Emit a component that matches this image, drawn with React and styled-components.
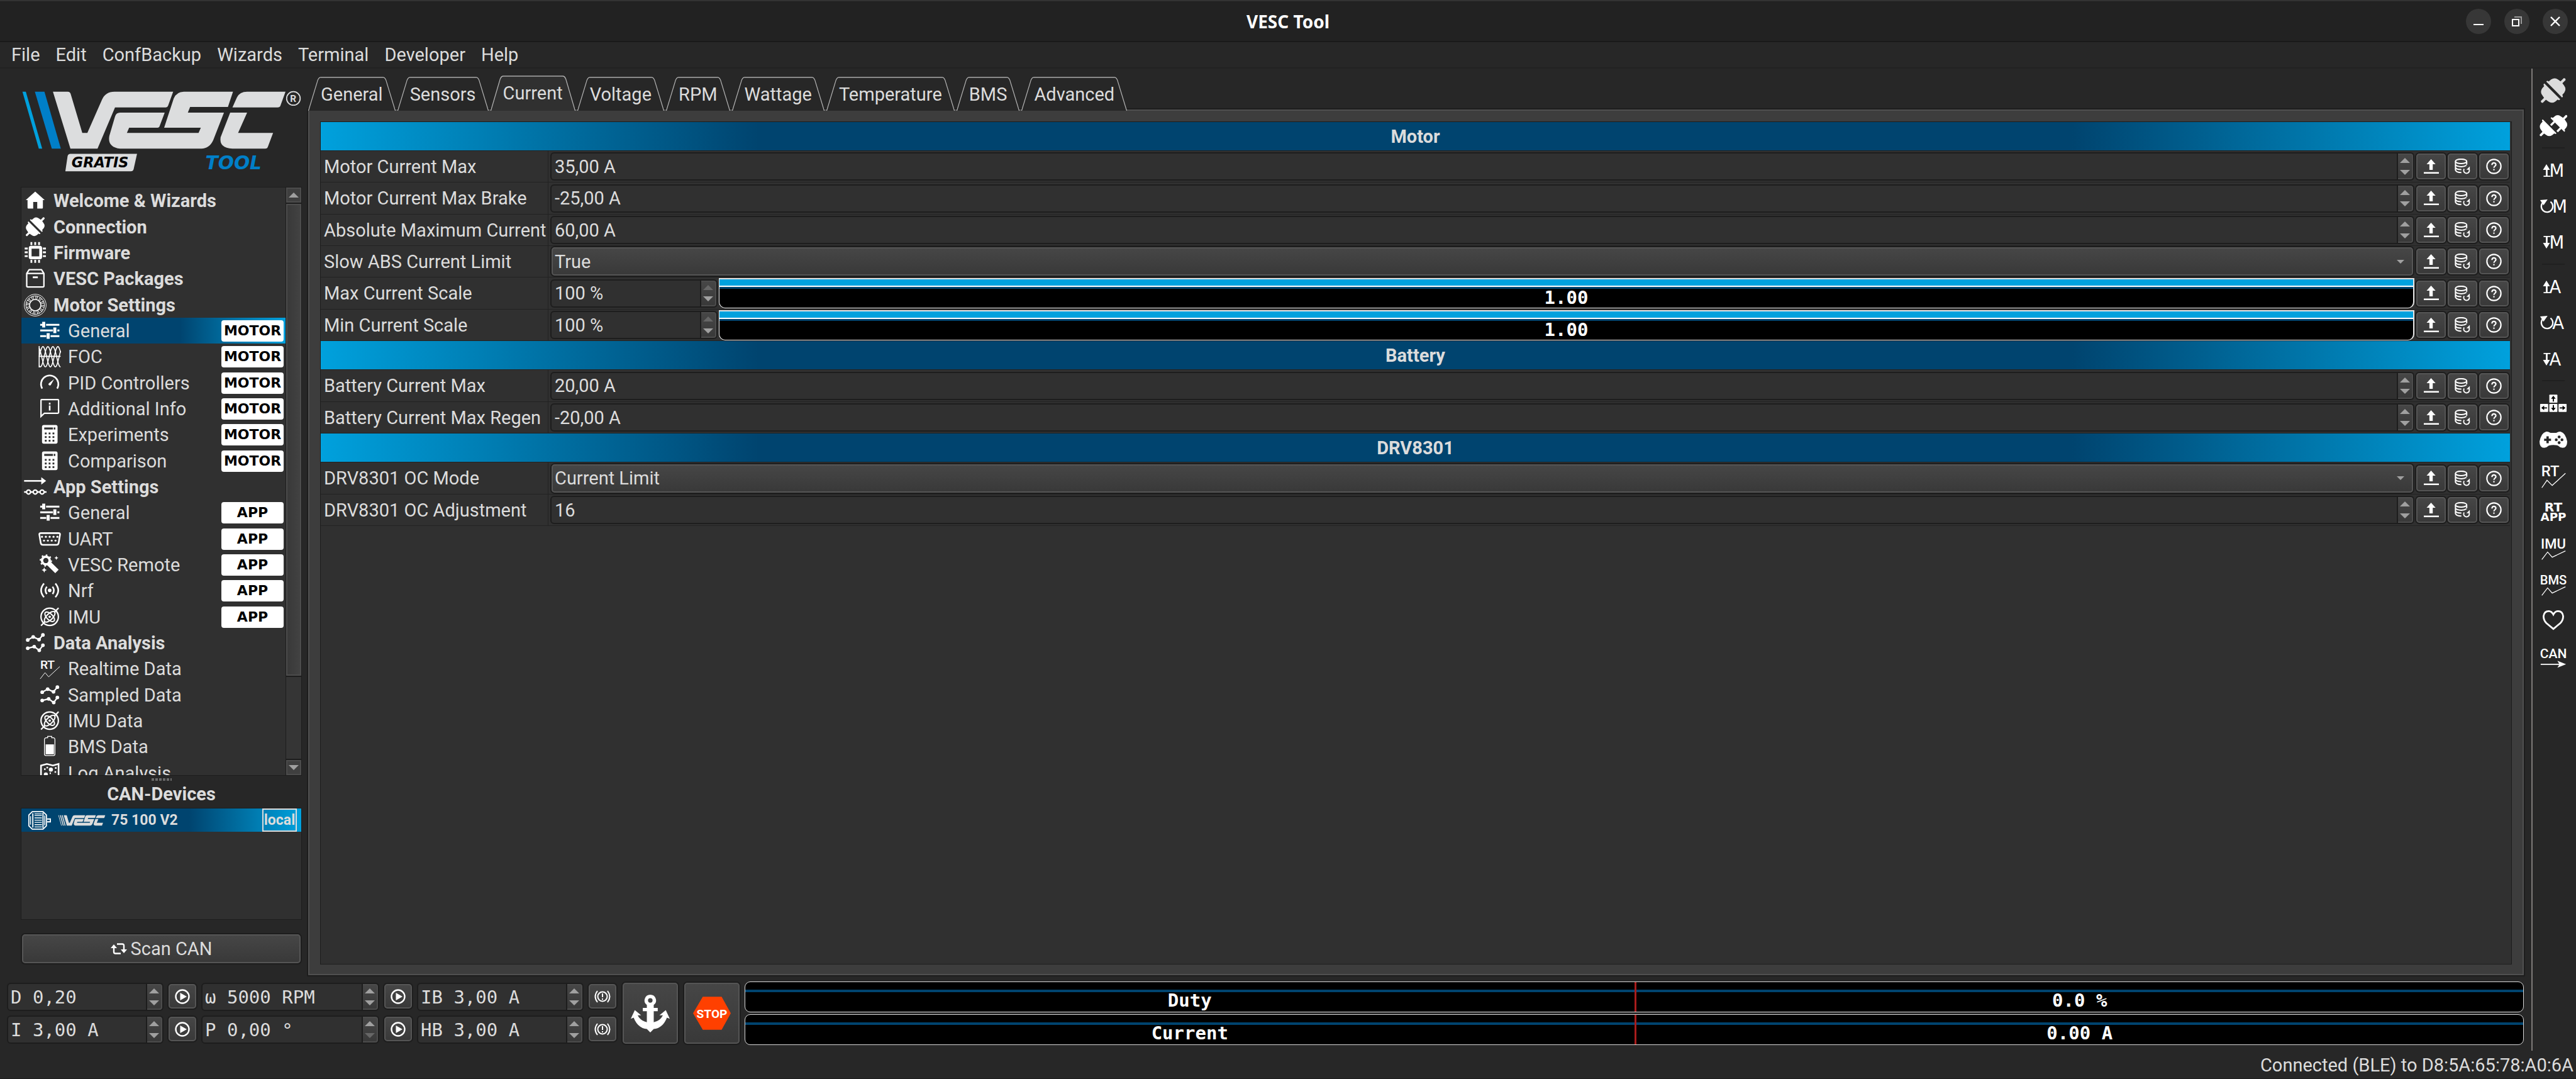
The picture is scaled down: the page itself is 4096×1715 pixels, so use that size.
import React from "react";
import styled, { createGlobalStyle, css } from "styled-components";

const c = {
  bg: "#272727",
  title: "#222222",
  base: "#303030",
  panel: "#3d3d3d",
  edge: "#555555",
  dark: "#1d1d1d",
  line: "#222222",
  text: "#dcdcdc",
  accent: "#00a1dd",
  deep: "#00446f",
};

const Global = createGlobalStyle`
  * { box-sizing: border-box; }
  body { margin: 0; background: ${c.bg}; }
  body, button, input, select {
    font-family: Roboto, "Open Sans", sans-serif;
    font-size: 29px;
    color: ${c.text};
  }
  button { cursor: pointer; }
`;

const mono = css`
  font-family: "DejaVu Sans Mono", "Liberation Mono", monospace;
`;

const raised = css`
  border: 2px solid ${c.edge};
  border-radius: 5px;
  background: linear-gradient(#464646, #393939);
  box-shadow: 0 0 0 2px ${c.dark};
`;

/* ---------- window ---------- */

const Window = styled.div`
  min-height: 100vh;
  display: flex;
  flex-direction: column;
  background: ${c.bg};
`;

const TitleBar = styled.header`
  height: 67px;
  display: grid;
  grid-template-columns: 1fr auto 1fr;
  align-items: center;
  padding: 0 13px;
  background: ${c.title};
  border-top: 2px solid #333333;
  border-bottom: 2px solid #191919;
`;

const Title = styled.h1`
  grid-column: 2;
  margin: 0;
  font-family: "Noto Sans", sans-serif;
  font-size: 28px;
  line-height: 36px;
  font-weight: 700;
  color: #ffffff;
`;

const WindowButtons = styled.div`
  justify-self: end;
  display: flex;
  gap: 21px;
`;

const RoundButton = styled.button`
  width: 40px;
  height: 40px;
  padding: 0;
  border: 0;
  border-radius: 50%;
  background: #373737;
  display: grid;
  place-items: center;
`;

const MenuBar = styled.nav`
  height: 42px;
  display: flex;
  align-items: center;
  gap: 25px;
  padding: 0 18px;
  border-bottom: 2px solid ${c.line};
`;

const MenuItem = styled.button`
  padding: 0;
  border: 0;
  background: none;
  line-height: 36px;
`;

const Body = styled.div`
  flex: 1;
  display: flex;
`;

const Workspace = styled.main`
  flex: 1;
  min-width: 0;
  display: flex;
  flex-direction: column;
  padding: 0 12px 9px 0;
`;

const Upper = styled.div`
  flex: 1;
  display: flex;
  gap: 10px;
`;

const StatusBar = styled.footer`
  height: 45px;
  display: flex;
  justify-content: flex-end;
  align-items: center;
  padding: 1px 4px 0;
  border-bottom: 1px solid ${c.dark};
`;

/* ---------- sidebar ---------- */

const Sidebar = styled.aside`
  width: 480px;
  padding: 33px 0 19px 33px;
  display: flex;
  flex-direction: column;
`;

const TreeBox = styled.div`
  flex: 1 0 0;
  min-height: 0;
  margin-top: 22px;
  display: flex;
  border: 1px solid ${c.dark};
  background: ${c.base};
  overflow: hidden;
`;

const Tree = styled.ul`
  flex: 1;
  height: 0;
  margin: 0;
  padding: 0;
  list-style: none;
`;

const TreeItem = styled.li`
  height: 41px;
  &:nth-child(3n + 1) {
    height: 42px;
  }
`;

const TreeLink = styled.a`
  height: 100%;
  display: flex;
  align-items: center;
  gap: 11px;
  padding: 0 3px 0 ${(p) => (p.$child ? 27 : 4)}px;
  font-weight: ${(p) => (p.$child ? 400 : 700)};
  color: ${c.text};
  text-decoration: none;
  white-space: nowrap;
  background: ${(p) =>
    p.$active ? `linear-gradient(90deg, ${c.deep} 60%, ${c.accent})` : "none"};
`;

const Badge = styled.span`
  width: 99px;
  height: 34px;
  margin-left: auto;
  border-radius: 4px;
  background: #ffffff;
  color: #000000;
  font: 700 22px/34px "DejaVu Sans", sans-serif;
  text-align: center;
`;

const ScrollBar = styled.div`
  width: 25px;
  display: flex;
  flex-direction: column;
  border-left: 1px solid ${c.dark};
  background: #353535;
`;

const ScrollButton = styled.button`
  height: 24px;
  padding: 0;
  border: 2px solid #4c4c4c;
  background: #3f3f3f;
  display: grid;
  place-items: center;
`;

const ScrollTrack = styled.div`
  flex: 1;
  display: flex;
  border: solid ${c.dark};
  border-width: 2px 0;
`;

const ScrollThumb = styled.div`
  width: 100%;
  height: 85%;
  border: 2px solid #4c4c4c;
  background: linear-gradient(90deg, #393939, #424242);
  box-shadow: 0 2px 0 ${c.dark};
`;

const Grip = styled.div`
  height: 4px;
  width: 32px;
  margin: 4px auto 0;
  background: repeating-linear-gradient(90deg, #6a6a6a 0 4px, transparent 4px 6px);
`;

const SideTitle = styled.h2`
  margin: 2px 0 3px;
  font-size: 29px;
  line-height: 38px;
  font-weight: 700;
  text-align: center;
`;

const DeviceBox = styled.div`
  height: 178px;
  border: 1px solid ${c.dark};
  background: ${c.base};
`;

const Device = styled.button`
  width: 100%;
  height: 37px;
  display: flex;
  align-items: center;
  padding: 0 7px 0 11px;
  border: 0;
  background: linear-gradient(90deg, ${c.deep} 60%, ${c.accent});
  font-size: 23px;
  font-weight: 700;
`;

const DeviceLogo = styled.span`
  display: flex;
  margin-left: 11px;
`;

const DeviceName = styled.span`
  flex: 1;
  margin-left: 9px;
  text-align: left;
`;

const LocalTag = styled.span`
  width: 55px;
  border: 2px solid ${c.text};
  line-height: 33px;
  text-align: center;
`;

const ScanButton = styled.button`
  ${raised}
  height: 46px;
  margin: 23px 2px 0 2px;
  padding: 0;
  display: flex;
  align-items: center;
  justify-content: center;
  gap: 6px;
`;

/* ---------- tabs and parameter panel ---------- */

const Content = styled.section`
  flex: 1;
  min-width: 0;
  display: flex;
  flex-direction: column;
  padding-top: 11px;
`;

const Tabs = styled.div`
  display: flex;
  align-items: flex-end;
  gap: 3px;
  height: 56px;
  margin-bottom: -2px;
  position: relative;
`;

const Tab = styled.button`
  display: flex;
  height: ${(p) => (p.$active ? 56 : 54)}px;
  padding: 0;
  border: 0;
  background: none;
`;

const TabLabel = styled.span`
  height: 100%;
  padding-top: 8px;
  border-top: 2px solid #8a8a8a;
  background: ${(p) => (p.$active ? c.base : c.bg)};
  line-height: 36px;
`;

const TabSide = styled.svg`
  width: 20px;
  height: 100%;
  display: block;
`;

const Panel = styled.div`
  flex: 1;
  display: flex;
  padding: 17px 17px 15px;
  border: 2px solid #505050;
  background: ${c.panel};
  box-shadow: 0 0 0 2px ${c.dark};
`;

const Frame = styled.form`
  flex: 1;
  padding-right: 2px;
  border: 1px solid ${c.dark};
  background: ${c.base};
`;

const GroupHeader = styled.h2`
  height: 46px;
  margin: 0;
  border-bottom: 1px solid ${c.line};
  background: linear-gradient(
    90deg,
    ${c.accent},
    ${c.deep} 20%,
    ${c.deep} 80%,
    ${c.accent}
  );
  font-size: 29px;
  line-height: 46px;
  font-weight: 700;
  text-align: center;
`;

const ParamRow = styled.div`
  height: 50px;
  display: grid;
  grid-template-columns: 362px 1fr auto;
  align-items: center;
  padding-right: 2px;
  border-bottom: 1px solid ${c.line};
  &:nth-child(3n) {
    height: 51px;
  }
`;

const ParamLabel = styled.label`
  height: 100%;
  display: flex;
  align-items: center;
  padding-left: 5px;
  border-right: 1px solid ${c.line};
  white-space: nowrap;
`;

const Editor = styled.div`
  min-width: 0;
  display: flex;
  align-items: center;
  gap: 2px;
  padding: 0 3px;
`;

const SpinBox = styled.div`
  flex: ${(p) => (p.$fixed ? "none" : "1")};
  width: ${(p) => (p.$fixed ? "266px" : "auto")};
  min-width: 0;
  height: 45px;
  display: flex;
  border: 2px solid ${c.dark};
  border-radius: 6px;
  background: ${c.base};
  overflow: hidden;
`;

const SpinInput = styled.input`
  flex: 1;
  min-width: 0;
  padding: 0 0 0 ${(p) => (p.$mono ? 4 : 5)}px;
  border: 0;
  background: none;
  outline: none;
  ${(p) => p.$mono && mono}
`;

const Steps = styled.div`
  width: 24px;
  display: grid;
  grid-template-rows: 1fr 1fr;
  border: solid #4c4c4c;
  border-width: 2px 2px 2px 0;
  border-radius: 0 4px 4px 0;
  background: linear-gradient(#464646, #393939);
  box-shadow: -2px 0 0 ${c.dark};
`;

const Step = styled.button`
  padding: 0;
  border: 0;
  background: none;
  display: grid;
  place-items: center;
  color: ${(p) => (p.$off ? "#666666" : "#a0a0a0")};
`;

const Combo = styled.span`
  ${raised}
  flex: 1;
  height: 45px;
  margin: 0 2px;
  display: flex;
  align-items: center;
  padding-right: 11px;
`;

const Select = styled.select`
  flex: 1;
  height: 100%;
  padding: 0 0 0 3px;
  border: 0;
  outline: none;
  appearance: none;
  background: none;
`;

const RowButtons = styled.div`
  display: flex;
  gap: 3px;
`;

const ToolButton = styled.button`
  ${raised}
  width: 47px;
  height: 41px;
  padding: 0;
  display: grid;
  place-items: center;
`;

const ScaleBar = styled.output`
  flex: 1;
  height: 48px;
  display: flex;
  flex-direction: column;
  border: 2px solid #e6e6e6;
  border-width: 2px 2px 1px 1px;
  border-radius: 0 0 10px 10px;
  background: #000000;
`;

const ScaleFill = styled.span`
  height: 12px;
  flex: none;
  background: ${c.accent};
  border-bottom: 2px solid #ffffff;
  box-shadow: 0 3px 0 ${c.deep};
`;

const ScaleText = styled.span`
  ${mono}
  flex: 1;
  font-weight: 700;
  line-height: 34px;
  text-align: center;
  color: #ffffff;
`;

/* ---------- bottom controls ---------- */

const Controls = styled.div`
  display: flex;
  gap: 6px;
  padding: 10px 0 0 11px;
`;

const ControlColumn = styled.div`
  display: grid;
  grid-template-columns: ${(p) => p.$width}px 48px;
  gap: 7px 6px;
  padding: 2px 0;
`;

const SmallButton = styled.button`
  ${raised}
  height: 39px;
  width: 44px;
  margin: 2px;
  padding: 0;
  display: grid;
  place-items: center;
`;

const BigButton = styled.button`
  ${raised}
  width: 88px;
  height: 97px;
  margin: 2px;
  padding: 0;
  display: grid;
  place-items: center;
`;

const Gauges = styled.div`
  flex: 1;
  display: grid;
  grid-template-rows: 1fr 1fr;
  gap: 3px;
`;

const Gauge = styled.div`
  display: grid;
  grid-template-columns: 1fr 1fr;
  border: 1px solid #d8d8d8;
  border-radius: 9px;
  background: linear-gradient(
    #000000 12px,
    ${c.deep} 12px,
    ${c.deep} 16px,
    #000000 16px
  );
  ${mono}
  font-weight: 700;
  line-height: 36px;
  color: #ffffff;
  text-align: center;
`;

const GaugeCell = styled.span`
  padding-top: 11px;
  & + & {
    border-left: 3px solid #a81c1c;
  }
`;

/* ---------- right toolbar ---------- */

const ToolBar = styled.aside`
  width: 71px;
  display: flex;
  flex-direction: column;
  align-items: center;
  padding: 6px 3px 0 0;
  border-left: 2px solid #7d7a78;
`;

const BarButton = styled.button`
  width: 60px;
  height: 57px;
  padding: 0;
  border: 0;
  background: none;
  display: grid;
  place-items: center;
  &:nth-child(3n) {
    height: 58px;
  }
`;

const BarLine = styled.hr`
  width: 36px;
  height: 2px;
  margin: 5px 0 6px;
  border: 0;
  background: #202020;
`;

/* ---------- drawings ---------- */

const TreeSvg = ({ children }) => (
  <svg width="36" height="36" viewBox="0 0 112 112" fill="none" stroke="#fff" aria-hidden="true">
    {children}
  </svg>
);

const wave = (phase) => {
  const pts = [];
  for (let x = 4; x <= 110; x += 2) {
    pts.push(`${x} ${(56 - 50 * Math.sin(((x - 4) / 74) * 2 * Math.PI + phase)).toFixed(1)}`);
  }
  return "M" + pts.join("L");
};

const PlugHalf = ({ flip, prongs }) => (
  <g transform={flip ? "scale(-1 1)" : undefined} stroke="none">
    <path d="M-5 -42Q-12 -44 -12 -36L-24 -35Q-40 -32 -42 -16L-44 -5H-61Q-67 0 -61 5H-44L-42 16Q-40 32 -24 35L-12 36Q-12 44 -5 42Z" />
    {prongs && <path d="M-6 -24H16V-15H-6ZM-6 15H16V24H-6Z" />}
  </g>
);

const Plug = ({ color = "#fff" }) => (
  <g transform="translate(56 54) rotate(-45)" fill={color}>
    <PlugHalf />
    <PlugHalf flip />
  </g>
);

const Calculator = () => (
  <>
    <rect x="18" y="8" width="77" height="92" rx="9" fill="#fff" stroke="none" />
    <path d="M29 20H72V30H29Z" fill={c.base} stroke="none" />
    <path d="M76 20H84V30H76Z" fill={c.base} stroke="none" />
    {[50, 68, 86].map((y) =>
      [37, 56, 75].map((x) => (
        <rect key={x + "-" + y} x={x - 5} y={y - 5} width="9" height="9" fill={c.base} stroke="none" />
      ))
    )}
  </>
);

const Nodes = () => (
  <g strokeWidth="7" fill="#fff">
    <path d="M19 41L46 26L75 39L94 16M19 82L51 74L76 92L94 67" fill="none" />
    {[[19, 41], [46, 26], [75, 39], [94, 16], [19, 82], [51, 74], [76, 92], [94, 67]].map(([x, y]) => (
      <circle key={x + "-" + y} cx={x} cy={y} r="9" stroke="none" />
    ))}
  </g>
);

const Imu = () => (
  <g strokeWidth="7">
    <circle cx="56" cy="54" r="43" />
    <path d="M13 98L33 78M79 32L100 10" />
    <ellipse cx="56" cy="54" rx="34" ry="15" transform="rotate(-45 56 54)" strokeWidth="6" />
    <ellipse cx="56" cy="54" rx="30" ry="15" transform="rotate(45 56 54)" strokeWidth="6" />
    <circle cx="56" cy="54" r="6" fill="#fff" stroke="none" />
  </g>
);

const Tune = () => (
  <g fill="#fff" stroke="none">
    <path d="M9 21H19V11H34V39H19V30H9ZM38 21H104V30H38Z" />
    <path d="M9 49H72V58H9ZM74 39H89V67H74ZM94 49H104V58H94Z" />
    <path d="M9 77H39V86H9ZM41 67H56V95H41ZM60 77H104V86H60Z" />
  </g>
);

const treeIcons = {
  home: <path d="M56 11L103 53H94V91Q94 95 90 95H66V62H46V95H22Q18 95 18 91V53H9Z" fill="#fff" stroke="none" />,
  plug: <Plug />,
  chip: (
    <>
      <rect x="31" y="28" width="52" height="52" rx="4" strokeWidth="14" />
      <path d="M37 2V17M56 2V17M75 2V17M37 90V105M56 90V105M75 90V105M4 34H19M4 53H19M4 72H19M94 34H109M94 53H109M94 72H109" strokeWidth="9" />
    </>
  ),
  box: (
    <>
      <path d="M14 30L26 11H87L99 30V92Q99 97 94 97H19Q14 97 14 92ZM14 30H99" strokeWidth="7" strokeLinejoin="round" />
      <path d="M44 49H69" strokeWidth="9" />
    </>
  ),
  stator: (
    <>
      <circle cx="56" cy="56" r="54" strokeWidth="3" />
      <circle cx="56" cy="56" r="46" strokeWidth="3" />
      <circle cx="56" cy="56" r="28" strokeWidth="5" />
      <circle cx="56" cy="56" r="37" strokeWidth="16" strokeDasharray="3 4 3 9.4" />
    </>
  ),
  tune: <Tune />,
  waves: (
    <>
      <path d="M4 3V109M4 54H110" strokeWidth="5" />
      <path d={wave(0)} strokeWidth="5" />
      <path d={wave(2.09)} strokeWidth="5" />
      <path d={wave(4.19)} strokeWidth="5" />
    </>
  ),
  speed: (
    <>
      <path d="M19 83A43 43 0 1 1 93 83" strokeWidth="8" />
      <path d="M78 36L61 66Q54 70 50 63Q49 58 53 56Z" fill="#fff" stroke="none" />
    </>
  ),
  info: (
    <>
      <path d="M13 93V14Q13 10 17 10H96Q100 10 100 14V73Q100 77 96 77H30Z" strokeWidth="7" />
      <path d="M56 25V34M56 39V64" strokeWidth="8" />
    </>
  ),
  calculator: <Calculator />,
  app: (
    <>
      <path d="M1 26H90" strokeWidth="8" />
      <path d="M86 8L110 26L86 44Z" fill="#fff" stroke="none" />
      <path d="M1 81H13M33 81H46M66 81H80M100 81H112" strokeWidth="8" />
      <circle cx="23" cy="81" r="10" strokeWidth="7" />
      <circle cx="56" cy="81" r="10" strokeWidth="7" />
      <circle cx="90" cy="81" r="10" strokeWidth="7" />
    </>
  ),
  uart: (
    <>
      <path d="M13 26H99Q109 26 107 34L100 76Q98 84 90 84H22Q14 84 12 76L5 34Q3 26 13 26Z" strokeWidth="8" />
      {[18, 37, 56, 75, 94].map((x) => <circle key={x} cx={x} cy="44" r="5" fill="#fff" stroke="none" />)}
      {[28, 47, 66, 85].map((x) => <circle key={x} cx={x} cy="63" r="5" fill="#fff" stroke="none" />)}
    </>
  ),
  wand: (
    <>
      <circle cx="37" cy="34" r="19" strokeWidth="12" />
      <circle cx="37" cy="34" r="27" strokeWidth="7" strokeDasharray="8 13" />
      <path d="M50 47L92 88" strokeWidth="24" strokeLinejoin="round" />
      <path d="M89 11L92 18L99 21L92 24L89 31L86 24L79 21L86 18ZM29 68L33 77L42 81L33 85L29 94L25 85L16 81L25 77Z" fill="#fff" stroke="none" />
    </>
  ),
  radio: (
    <>
      <circle cx="56" cy="54" r="9" fill="#fff" stroke="none" />
      <path d="M42 36Q28 54 42 72M70 36Q84 54 70 72" strokeWidth="8" />
      <path d="M28 20Q-1 54 28 88M84 20Q113 54 84 88" strokeWidth="8" />
    </>
  ),
  imu: <Imu />,
  nodes: <Nodes />,
  rt: (
    <>
      <text x="9" y="56" fontFamily="Roboto, sans-serif" fontSize="60" fontWeight="500" fill="#fff" stroke="none">RT</text>
      <path d="M9 106L33 75L51 96L106 45" strokeWidth="3" />
    </>
  ),
  battery: (
    <>
      <path d="M46 4H66V11H76Q82 13 82 20V92Q82 99 75 99H37Q30 99 30 92V20Q30 13 37 11H46Z" strokeWidth="4" />
      <rect x="36" y="44" width="41" height="49" fill="#fff" stroke="none" />
    </>
  ),
  map: (
    <>
      <path d="M13 100V18L42 10L72 18L100 10V100" strokeWidth="8" />
      <circle cx="62" cy="38" r="10" fill="#fff" stroke="none" />
      <circle cx="37" cy="62" r="10" fill="#fff" stroke="none" />
      <path d="M28 36H36M40 28H48M82 30H90M80 50H88M56 56H62" strokeWidth="8" />
    </>
  ),
};

const vescPaths = [
  "M94 162H120Q125 162 126 168L146 235H155L181 176Q187 162 203 162H307L298 187Q297 190 294 190H204L173 263H125Z",
  "M213 199H292L283 223Q282 226 278 226H229L225 235H352L356 226H291L308 174Q313 162 326 162H413L404 189H337L333 199H397L378 248Q371 263 357 263H213Q190 260 194 240L204 206Q206 199 213 199Z",
  "M412 190L420 172Q425 162 438 162H506L497 187Q496 190 492 190Z",
  "M408 199H438L422 235H484L475 259Q474 263 470 263H412Q388 262 391 243Z",
];

const Logo = () => (
  <svg width="447" height="133" viewBox="37 158 498 148" role="img" aria-label="VESC Tool Gratis">
    <path d="M40 162H46L75 263H69Z" fill="#00a1dd" />
    <path d="M62 162H79L108 263H92Z" fill="#007fc8" />
    {vescPaths.map((d) => <path key={d} d={d} fill="#dcddde" />)}
    <circle cx="520" cy="174" r="12" fill="none" stroke="#dcddde" strokeWidth="2" />
    <text x="514" y="180" fontFamily="Roboto, sans-serif" fontSize="17" fontWeight="700" fill="#dcddde">R</text>
    <path d="M125 272H243L237 299Q236 303 232 303H116L120 276Q121 272 125 272Z" fill="#dcddde" />
    <text x="127" y="296" fontFamily="DejaVu Sans, sans-serif" fontSize="25" fontWeight="700" fontStyle="italic" fill="#000">GRATIS</text>
    <text x="364" y="299" fontFamily="DejaVu Sans, sans-serif" fontSize="33" fontWeight="700" fontStyle="italic" fill="#007fc8">TOOL</text>
  </svg>
);

const MiniLogo = () => (
  <svg width="76" height="18" viewBox="36 158 474 109" preserveAspectRatio="none" aria-hidden="true">
    <path d="M40 162H46L75 263H69ZM56 162H66L95 263H85ZM74 162H84L113 263H103Z" fill={c.text} />
    {vescPaths.map((d) => <path key={d} d={d} fill={c.text} />)}
  </svg>
);

const MotorIcon = () => (
  <svg width="36" height="30" viewBox="0 0 40 33" fill="none" stroke="#fff" strokeWidth="2" aria-hidden="true">
    <path d="M7 1H26L32 7V26L26 32H7L1 26V7Z" />
    <path d="M33 14H39V19H33M8 4V29M26 3V30" />
    <path d="M11 5H24M11 8H24M11 12H24M11 16H24M11 20H24M11 24H24M11 28H24" strokeWidth="1.5" />
    <path d="M4 9V24M29 8V25" strokeWidth="1.5" />
  </svg>
);

const Triangle = ({ down, w = 16, h = 8 }) => (
  <svg width={w} height={h} viewBox="0 0 16 8" fill="currentColor" aria-hidden="true">
    <path d={down ? "M0 0H16L8 8Z" : "M0 8H16L8 0Z"} />
  </svg>
);

const UploadIcon = () => (
  <svg width="24" height="24" viewBox="0 0 27 27" fill="#fff" aria-hidden="true">
    <path d="M13 0L21 9H16V19H10V9H5ZM0 23H27V26H0Z" />
  </svg>
);

const DefaultsIcon = () => (
  <svg width="25" height="25" viewBox="0 0 28 28" fill="none" stroke="#fff" strokeWidth="2.2" aria-hidden="true">
    <ellipse cx="11.5" cy="5" rx="10" ry="4" />
    <path d="M1.5 5V20C1.5 23 6 25 12 25M21.5 5V11M1.5 10C1.5 13 7 14.5 12 14.5C16 14.5 19 13.5 21 12M1.5 15C1.5 18 6 19.5 12 19.5" />
    <path d="M24.5 17.5A5 5 0 1 1 17 18.5" />
    <path d="M27 14V20H21Z" fill="#fff" stroke="none" />
  </svg>
);

const HelpIcon = () => (
  <svg width="25" height="25" viewBox="0 0 28 28" fill="none" stroke="#fff" strokeWidth="2.4" aria-hidden="true">
    <circle cx="14" cy="14" r="12.5" />
    <path d="M10.5 11.5C10.5 6.5 17.5 6.5 17.5 11C17.5 13.5 14 13.5 14 16.5M14 18.5V21" />
  </svg>
);

const PlayIcon = () => (
  <svg width="24" height="24" viewBox="0 0 24 24" aria-hidden="true">
    <circle cx="12" cy="12" r="10.5" fill="none" stroke="#fff" strokeWidth="2.4" />
    <path d="M8.5 6L19 12L8.5 18Z" fill="#fff" />
  </svg>
);

const BrakeIcon = () => (
  <svg width="26" height="20" viewBox="0 0 26 20" fill="none" stroke="#fff" strokeWidth="2" aria-hidden="true">
    <circle cx="13" cy="10" r="7.5" />
    <path d="M13 5V11M13 13V15M5 1Q-2 10 5 19M21 1Q28 10 21 19" />
  </svg>
);

const ScanIcon = () => (
  <svg width="26" height="18" viewBox="0 0 26 18" fill="none" stroke="#fff" strokeWidth="2.4" aria-hidden="true">
    <path d="M5 6V14Q5 16.5 7.5 16.5H16M21 12V4Q21 1.5 18.5 1.5H10" />
    <path d="M0 8L5 2L10 8ZM16 10H26L21 16Z" fill="#fff" stroke="none" />
  </svg>
);

const AnchorIcon = () => (
  <svg width="62" height="62" viewBox="-34 -34 68 68" fill="#fff" aria-hidden="true">
    <path fillRule="evenodd" d="M0 -33A10 10 0 0 1 6 -15V-10H13V-4H6V15Q17 13 22 3L16 3L27 -6L34 9L29 7Q22 25 6 27L0 33L-6 27Q-22 25 -29 7L-34 9L-27 -6L-16 3L-22 3Q-17 13 -6 15V-4H-13V-10H-6V-15A10 10 0 0 1 0 -33ZM0 -27A4 4 0 1 0 0 -19A4 4 0 1 0 0 -27Z" />
  </svg>
);

const StopIcon = () => (
  <svg width="60" height="53" viewBox="0 0 66 58" role="img" aria-label="Stop">
    <path d="M17 0H50L66 29L50 58H17L0 29Z" fill="#ff4000" />
    <text x="33" y="37" textAnchor="middle" fontFamily="Roboto, sans-serif" fontSize="21" fontWeight="700" fill="#fff">STOP</text>
  </svg>
);

const BarSvg = ({ children }) => (
  <svg width="44" height="44" viewBox="0 0 48 48" fill="#fff" aria-hidden="true">
    {children}
  </svg>
);

const letterIcon = (kind, letter) => (
  <BarSvg>
    {kind === "up" && <path d="M12 13L18 23H14V33H19V35H7V33H11V23H6Z" />}
    {kind === "down" && <path d="M12 35L18 25H14V15H19V13H7V15H11V25H6Z" />}
    {kind === "cycle" && (
      <>
        <path d="M19 16A10 10 0 1 1 6 17" fill="none" stroke="#fff" strokeWidth="2.5" />
        <path d="M1 13L14 12L7 22Z" />
      </>
    )}
    <text x={kind === "cycle" ? 22 : 17} y="35" fontFamily="DejaVu Sans, sans-serif" fontSize="30">{letter}</text>
  </BarSvg>
);

const chartIcon = (label, size) => (
  <BarSvg>
    <text x={label === "RT" ? 3 : 24} y="25" textAnchor={label === "RT" ? "start" : "middle"} fontFamily="Roboto, sans-serif" fontSize={size} fontWeight="500">{label}</text>
    <path d={label === "RT" ? "M4 45L13 32L22 41L45 20" : "M4 44L14 31L22 40L45 29"} fill="none" stroke="#fff" strokeWidth="1.4" />
  </BarSvg>
);

const arrowKey = (x, y, turn) => (
  <g transform={`translate(${x} ${y})`}>
    <rect x="-7" y="-7" width="14" height="14" rx="1" />
    <path d="M0 -5L4 0H1V5H-1V0H-4Z" fill="#000" transform={`rotate(${turn})`} />
  </g>
);

const toolbar = [
  ["Connect", <BarSvg><g transform="translate(-2 -1) scale(0.46)"><Plug color="#dcdcdc" /></g></BarSvg>],
  ["Disconnect", (
    <BarSvg>
      <g transform="translate(24 24) rotate(-45) scale(0.4)">
        <g transform="translate(-6 -12)"><PlugHalf /></g>
        <g transform="translate(12 8)"><PlugHalf flip prongs /></g>
      </g>
    </BarSvg>
  )],
  null,
  ["Read motor configuration", letterIcon("up", "M")],
  ["Read default motor configuration", letterIcon("cycle", "M")],
  ["Write motor configuration", letterIcon("down", "M")],
  null,
  ["Read app configuration", letterIcon("up", "A")],
  ["Read default app configuration", letterIcon("cycle", "A")],
  ["Write app configuration", letterIcon("down", "A")],
  null,
  ["Keyboard control", <BarSvg>{arrowKey(24, 16, 0)}{arrowKey(8, 32, -90)}{arrowKey(24, 32, 180)}{arrowKey(40, 32, 90)}</BarSvg>],
  ["Gamepad control", (
    <BarSvg>
      <path d="M11 10Q14 9 19 12H29Q34 9 37 10Q45 12 48 27Q48 38 40 38Q36 38 32 34Q24 32 16 34Q12 38 8 38Q0 38 0 27Q3 12 11 10Z" />
      <path d="M12 18H16V22H20V26H16V30H12V26H8V22H12Z" fill={c.bg} />
      <g fill={c.bg}>
        <circle cx="34" cy="19" r="2.5" /><circle cx="34" cy="29" r="2.5" />
        <circle cx="29" cy="24" r="2.5" /><circle cx="39" cy="24" r="2.5" />
      </g>
    </BarSvg>
  )],
  ["Stream realtime data", chartIcon("RT", 26)],
  ["Stream realtime app data", (
    <BarSvg>
      <text x="24" y="24" textAnchor="middle" fontFamily="DejaVu Sans, sans-serif" fontSize="22" fontWeight="700">RT</text>
      <text x="24" y="40" textAnchor="middle" fontFamily="DejaVu Sans, sans-serif" fontSize="20" fontWeight="700">APP</text>
    </BarSvg>
  )],
  ["Stream IMU data", chartIcon("IMU", 24)],
  ["Stream BMS data", chartIcon("BMS", 22)],
  ["Send alive packets", <BarSvg><path d="M24 40L12 30Q7 25 7 18Q8 9 16 9Q21 9 24 15Q27 9 32 9Q40 9 41 18Q41 25 36 30Z" fill="none" stroke="#fff" strokeWidth="3" /></BarSvg>],
  ["CAN forward", (
    <BarSvg>
      <text x="24" y="27" textAnchor="middle" fontFamily="Roboto, sans-serif" fontSize="23" fontWeight="500">CAN</text>
      <path d="M2 37H34L31 32L46 38L31 44L34 39H2Z" />
    </BarSvg>
  )],
];

/* ---------- data ---------- */

const tree = [
  ["home", "Welcome & Wizards"],
  ["plug", "Connection"],
  ["chip", "Firmware"],
  ["box", "VESC Packages"],
  ["stator", "Motor Settings"],
  ["tune", "General", "MOTOR"],
  ["waves", "FOC", "MOTOR"],
  ["speed", "PID Controllers", "MOTOR"],
  ["info", "Additional Info", "MOTOR"],
  ["calculator", "Experiments", "MOTOR"],
  ["calculator", "Comparison", "MOTOR"],
  ["app", "App Settings"],
  ["tune", "General", "APP"],
  ["uart", "UART", "APP"],
  ["wand", "VESC Remote", "APP"],
  ["radio", "Nrf", "APP"],
  ["imu", "IMU", "APP"],
  ["nodes", "Data Analysis"],
  ["rt", "Realtime Data", ""],
  ["nodes", "Sampled Data", ""],
  ["imu", "IMU Data", ""],
  ["battery", "BMS Data", ""],
  ["map", "Log Analysis", ""],
];

const groups = [
  ["Motor", [
    ["Motor Current Max", "35,00 A"],
    ["Motor Current Max Brake", "-25,00 A"],
    ["Absolute Maximum Current", "60,00 A"],
    ["Slow ABS Current Limit", "True", "combo"],
    ["Max Current Scale", "100 %", "scale"],
    ["Min Current Scale", "100 %", "scale"],
  ]],
  ["Battery", [
    ["Battery Current Max", "20,00 A"],
    ["Battery Current Max Regen", "-20,00 A"],
  ]],
  ["DRV8301", [
    ["DRV8301 OC Mode", "Current Limit", "combo"],
    ["DRV8301 OC Adjustment", "16"],
  ]],
];

const controls = [
  [249, PlayIcon, [["Duty", "D 0,20"], ["Current", "I 3,00 A"]]],
  [283, PlayIcon, [["Speed", "ω 5000 RPM"], ["Position", "P 0,00 °"]]],
  [265, BrakeIcon, [["Brake current", "IB 3,00 A"], ["Handbrake current", "HB 3,00 A"]]],
];

/* ---------- parts ---------- */

function Spin({ id, label, value, fixed, monospace, upOff, downOff }) {
  return (
    <SpinBox $fixed={fixed}>
      <SpinInput id={id} aria-label={label} defaultValue={value} $mono={monospace} />
      <Steps>
        <Step type="button" aria-label="Increase" $off={upOff}><Triangle /></Step>
        <Step type="button" aria-label="Decrease" $off={downOff}><Triangle down /></Step>
      </Steps>
    </SpinBox>
  );
}

function Param({ name, value, kind }) {
  const id = name.toLowerCase().replace(/ /g, "-");
  return (
    <ParamRow>
      <ParamLabel htmlFor={id}>{name}</ParamLabel>
      <Editor>
        {kind === "combo" ? (
          <Combo>
            <Select id={id} defaultValue={value}><option>{value}</option></Select>
            <Step as="span"><Triangle down w={14} h={6} /></Step>
          </Combo>
        ) : (
          <Spin id={id} value={value} fixed={kind === "scale"} upOff={kind === "scale"} />
        )}
        {kind === "scale" && (
          <ScaleBar>
            <ScaleFill />
            <ScaleText>1.00</ScaleText>
          </ScaleBar>
        )}
      </Editor>
      <RowButtons>
        <ToolButton type="button" aria-label="Read current value"><UploadIcon /></ToolButton>
        <ToolButton type="button" aria-label="Read default value"><DefaultsIcon /></ToolButton>
        <ToolButton type="button" aria-label="Help"><HelpIcon /></ToolButton>
      </RowButtons>
    </ParamRow>
  );
}

function TabButton({ label, active }) {
  const fill = active ? c.base : c.bg;
  return (
    <Tab type="button" role="tab" aria-selected={active} $active={active}>
      <TabSide viewBox="0 0 21 56" preserveAspectRatio="none" aria-hidden="true">
        <path d="M0.5 56L15 9Q17 1 21 1V56Z" fill={fill} />
        <path d="M0.5 56L15 9Q17 1 21 1" fill="none" stroke="#b4b4b4" strokeWidth="1.3" />
      </TabSide>
      <TabLabel $active={active}>{label}</TabLabel>
      <TabSide viewBox="0 0 21 56" preserveAspectRatio="none" aria-hidden="true">
        <path d="M20.5 56L6 9Q4 1 0 1V56Z" fill={fill} />
        <path d="M20.5 56L6 9Q4 1 0 1" fill="none" stroke="#b4b4b4" strokeWidth="1.3" />
      </TabSide>
    </Tab>
  );
}

export default function App() {
  return (
    <Window>
      <Global />
      <TitleBar>
        <Title>VESC Tool</Title>
        <WindowButtons>
          <RoundButton aria-label="Minimize">
            <svg width="16" height="16" viewBox="0 0 16 16"><path d="M0 13H16" stroke="#fff" strokeWidth="2" /></svg>
          </RoundButton>
          <RoundButton aria-label="Restore">
            <svg width="16" height="16" viewBox="0 0 16 16" fill="none" strokeWidth="2">
              <path d="M4 1H15V12" stroke="#9a9a9a" />
              <path d="M1 5H11V15H1Z" stroke="#fff" />
            </svg>
          </RoundButton>
          <RoundButton aria-label="Close">
            <svg width="16" height="16" viewBox="0 0 16 16"><path d="M1 1L15 15M15 1L1 15" stroke="#fff" strokeWidth="2.4" /></svg>
          </RoundButton>
        </WindowButtons>
      </TitleBar>
      <MenuBar>
        {["File", "Edit", "ConfBackup", "Wizards", "Terminal", "Developer", "Help"].map((m) => (
          <MenuItem key={m} type="button">{m}</MenuItem>
        ))}
      </MenuBar>
      <Body>
        <Workspace>
          <Upper>
            <Sidebar>
              <Logo />
              <TreeBox>
                <Tree>
                  {tree.map(([icon, label, badge], i) => (
                    <TreeItem key={i}>
                      <TreeLink href="#" $child={badge !== undefined} $active={i === 5}>
                        <TreeSvg>{treeIcons[icon]}</TreeSvg>
                        {label}
                        {badge && <Badge>{badge}</Badge>}
                      </TreeLink>
                    </TreeItem>
                  ))}
                </Tree>
                <ScrollBar aria-hidden="true">
                  <ScrollButton tabIndex={-1}><Step as="span"><Triangle /></Step></ScrollButton>
                  <ScrollTrack><ScrollThumb /></ScrollTrack>
                  <ScrollButton tabIndex={-1}><Step as="span"><Triangle down /></Step></ScrollButton>
                </ScrollBar>
              </TreeBox>
              <Grip />
              <SideTitle>CAN-Devices</SideTitle>
              <DeviceBox>
                <Device type="button">
                  <MotorIcon />
                  <DeviceLogo><MiniLogo /></DeviceLogo>
                  <DeviceName>75 100 V2</DeviceName>
                  <LocalTag>local</LocalTag>
                </Device>
              </DeviceBox>
              <ScanButton type="button"><ScanIcon />Scan CAN</ScanButton>
            </Sidebar>
            <Content>
              <Tabs role="tablist">
                {["General", "Sensors", "Current", "Voltage", "RPM", "Wattage", "Temperature", "BMS", "Advanced"].map((t) => (
                  <TabButton key={t} label={t} active={t === "Current"} />
                ))}
              </Tabs>
              <Panel>
                <Frame>
                  {groups.map(([title, rows]) => (
                    <React.Fragment key={title}>
                      <GroupHeader>{title}</GroupHeader>
                      {rows.map(([name, value, kind]) => (
                        <Param key={name} name={name} value={value} kind={kind} />
                      ))}
                    </React.Fragment>
                  ))}
                </Frame>
              </Panel>
            </Content>
          </Upper>
          <Controls>
            {controls.map(([width, Icon, rows]) => (
              <ControlColumn key={width} $width={width}>
                {rows.map(([label, value]) => (
                  <React.Fragment key={label}>
                    <Spin label={label} value={value} monospace downOff={label === "Position"} />
                    <SmallButton type="button" aria-label={"Apply " + label}><Icon /></SmallButton>
                  </React.Fragment>
                ))}
              </ControlColumn>
            ))}
            <BigButton type="button" aria-label="Full brake"><AnchorIcon /></BigButton>
            <BigButton type="button"><StopIcon /></BigButton>
            <Gauges>
              <Gauge><GaugeCell>Duty</GaugeCell><GaugeCell>0.0 %</GaugeCell></Gauge>
              <Gauge><GaugeCell>Current</GaugeCell><GaugeCell>0.00 A</GaugeCell></Gauge>
            </Gauges>
          </Controls>
        </Workspace>
        <ToolBar>
          {toolbar.map((item, i) =>
            item ? (
              <BarButton key={i} type="button" aria-label={item[0]}>{item[1]}</BarButton>
            ) : (
              <BarLine key={i} />
            )
          )}
        </ToolBar>
      </Body>
      <StatusBar>Connected (BLE) to D8:5A:65:78:A0:6A</StatusBar>
    </Window>
  );
}
